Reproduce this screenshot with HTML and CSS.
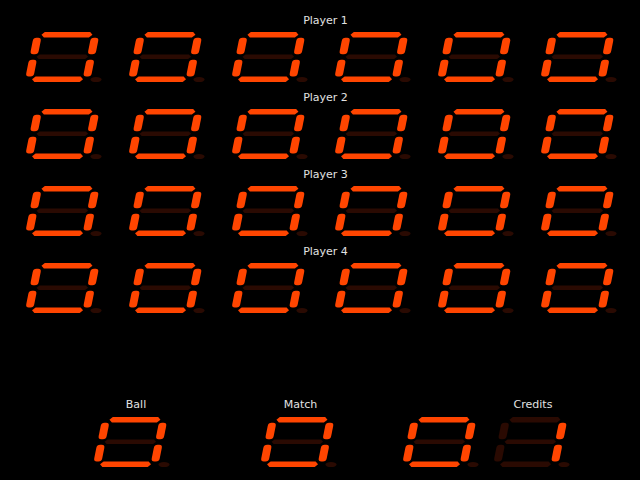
FILE: index.html
```html
<!DOCTYPE html>
<html>
<head>
  <meta charset="utf-8">
  <title>Scoreboard</title>
  <link rel="stylesheet" href="styles.css">
</head>
<body>

<!-- seven segment digits: a b c d e f g + dp -->
<svg class="defs" width="0" height="0">
  <defs>
    <g id="sa"><polygon points="7,2.8 10,-0.2 55,-0.2 58,2.8 55,5.6 10,5.6"/></g>
    <g id="sb"><rect x="57" y="5.8" width="8" height="16.4" rx="3.2"/></g>
    <g id="sc"><rect x="57" y="27.8" width="8" height="16.6" rx="3.2"/></g>
    <g id="sd"><polygon points="6.5,47.3 9.5,44.4 54.5,44.4 57.5,47.3 54.5,50.2 9.5,50.2"/></g>
    <g id="se"><rect x="-0.5" y="27.8" width="8" height="16.6" rx="3.2"/></g>
    <g id="sf"><rect x="-0.5" y="5.8" width="8" height="16.4" rx="3.2"/></g>
    <g id="sg"><polygon points="6.5,24.7 9,22.5 55.5,22.5 58,24.7 55.5,26.9 9,26.9"/></g>
  </defs>
  <symbol id="d0" viewBox="0 0 77 50">
    <g transform="matrix(1 0 -0.2 1 10 0)">
      <use href="#sa" class="on"/><use href="#sb" class="on"/><use href="#sc" class="on"/>
      <use href="#sd" class="on"/><use href="#se" class="on"/><use href="#sf" class="on"/>
      <use href="#sg" class="off"/>
    </g>
    <ellipse class="off" cx="71" cy="47.6" rx="5.5" ry="2.6"/>
  </symbol>
  <symbol id="d1" viewBox="0 0 77 50">
    <g transform="matrix(1 0 -0.2 1 10 0)">
      <use href="#sa" class="off"/><use href="#sb" class="on"/><use href="#sc" class="on"/>
      <use href="#sd" class="off"/><use href="#se" class="off"/><use href="#sf" class="off"/>
      <use href="#sg" class="off"/>
    </g>
    <ellipse class="off" cx="71" cy="47.6" rx="5.5" ry="2.6"/>
  </symbol>
</svg>

<div class="board">
  <div class="player">
    <h2>Player 1</h2>
    <div class="digits">
      <svg class="digit"><use href="#d0"/></svg><svg class="digit"><use href="#d0"/></svg><svg class="digit"><use href="#d0"/></svg>
      <svg class="digit"><use href="#d0"/></svg><svg class="digit"><use href="#d0"/></svg><svg class="digit"><use href="#d0"/></svg>
    </div>
  </div>
  <div class="player">
    <h2>Player 2</h2>
    <div class="digits">
      <svg class="digit"><use href="#d0"/></svg><svg class="digit"><use href="#d0"/></svg><svg class="digit"><use href="#d0"/></svg>
      <svg class="digit"><use href="#d0"/></svg><svg class="digit"><use href="#d0"/></svg><svg class="digit"><use href="#d0"/></svg>
    </div>
  </div>
  <div class="player">
    <h2>Player 3</h2>
    <div class="digits">
      <svg class="digit"><use href="#d0"/></svg><svg class="digit"><use href="#d0"/></svg><svg class="digit"><use href="#d0"/></svg>
      <svg class="digit"><use href="#d0"/></svg><svg class="digit"><use href="#d0"/></svg><svg class="digit"><use href="#d0"/></svg>
    </div>
  </div>
  <div class="player">
    <h2>Player 4</h2>
    <div class="digits">
      <svg class="digit"><use href="#d0"/></svg><svg class="digit"><use href="#d0"/></svg><svg class="digit"><use href="#d0"/></svg>
      <svg class="digit"><use href="#d0"/></svg><svg class="digit"><use href="#d0"/></svg><svg class="digit"><use href="#d0"/></svg>
    </div>
  </div>

  <div class="extras">
    <div class="box ball">
      <h2>Ball</h2>
      <svg class="digit"><use href="#d0"/></svg>
    </div>
    <div class="box match">
      <h2>Match</h2>
      <svg class="digit"><use href="#d0"/></svg>
    </div>
    <div class="box credits">
      <h2>Credits</h2>
      <div class="pair">
        <svg class="digit"><use href="#d0"/></svg><svg class="digit"><use href="#d1"/></svg>
      </div>
    </div>
  </div>
</div>

</body>
</html>
```

FILE: styles.css
```css
body {
  margin: 0;
  padding: 0;
  background: #000;
  color: #e2e2e2;
  font-family: "DejaVu Sans", sans-serif;
  font-size: 11px;
}
.defs {
  display: block;
  width: 0;
  height: 0;
}
.on { fill: #ff4500; }
.off { fill: #2a0a02; }

.board {
  padding-top: 14px;
}
h2 {
  margin: 0;
  font-size: 11px;
  font-weight: normal;
  line-height: 13px;
  text-align: center;
}
.player {
  height: 77px;
}
.player h2 {
  padding-left: 11px;
}
.digits {
  display: flex;
  gap: 26px;
  padding-left: 25px;
  margin-top: 5px;
}
.digit {
  display: block;
  width: 77px;
  height: 50px;
  flex: none;
  overflow: visible;
}

/* ball / match / credits */
.extras {
  display: flex;
  margin-top: 76px;
}
.box h2 {
  margin-bottom: 6px;
}
.ball {
  margin-left: 93px;
}
.ball h2 { padding-left: 9px; }
.match {
  margin-left: 90px;
}
.match h2 { padding-left: 4px; }
.credits {
  margin-left: 65px;
}
.credits h2 { padding-left: 94px; }
.pair {
  display: flex;
  gap: 14px;
}
```
